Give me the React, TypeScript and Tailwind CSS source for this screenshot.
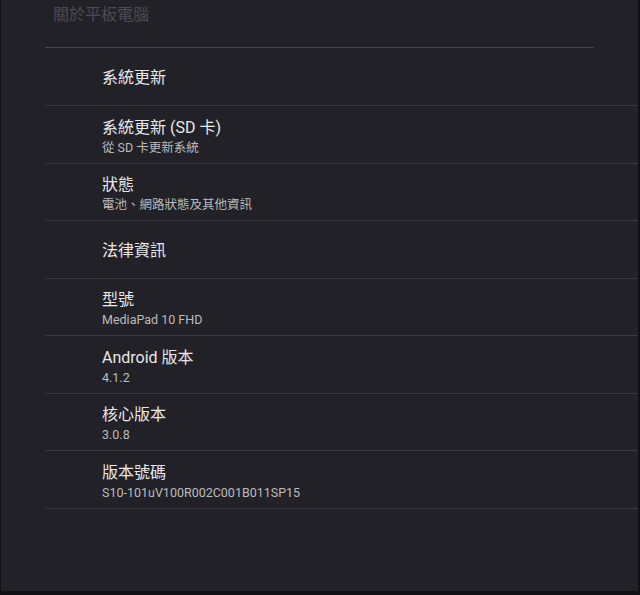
import React from "react";

type Item = { title: string; sub?: string; h: string };

const items: Item[] = [
  { title: "系統更新", h: "h-[57px]" },
  { title: "系統更新 (SD 卡)", sub: "從 SD 卡更新系統", h: "h-[57px]" },
  { title: "狀態", sub: "電池、網路狀態及其他資訊", h: "h-[56px]" },
  { title: "法律資訊", h: "h-[57px]" },
  { title: "型號", sub: "MediaPad 10 FHD", h: "h-[56px]" },
  { title: "Android 版本", sub: "4.1.2", h: "h-[57px]" },
  { title: "核心版本", sub: "3.0.8", h: "h-[56px]" },
  { title: "版本號碼", sub: "S10-101uV100R002C001B011SP15", h: "h-[57px]" },
];

export default function App() {
  return (
    <div
      className="w-[640px] h-[595px] bg-[#111113] flex flex-col overflow-hidden"
      style={{ fontFamily: "Roboto, 'Noto Sans CJK TC', sans-serif" }}
    >
      <div className="flex-1 flex flex-col bg-[#222127] ml-px mr-[2px] mb-[4px]">
        <div className="h-[47px] pl-[52px] pt-[3px]">
          <div className="text-[16px] leading-[24px] text-[#4c4b51]">關於平板電腦</div>
        </div>
        <div className="ml-[44px] w-[549px] h-px bg-[#47464c]" />
        <div className="ml-[44px] flex flex-col">
          {items.map((it) => (
            <div key={it.title} className="flex flex-col">
              <div
                className={`${it.h} flex flex-col justify-center pl-[57px] ${it.sub ? "pt-[3px]" : "pt-px"}`}
              >
                <div className="text-[16px] leading-[21px] text-[#e8e8e8]">{it.title}</div>
                {it.sub && (
                  <div className="text-[12.5px] leading-[17px] text-[#bcbcbc] mt-[1px]">{it.sub}</div>
                )}
              </div>
              <div className="h-px bg-[#38373d]" />
            </div>
          ))}
        </div>
      </div>
    </div>
  );
}
